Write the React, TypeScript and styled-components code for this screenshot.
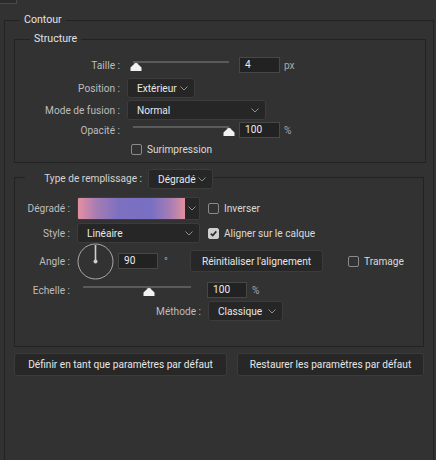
import React from "react";
import styled, { createGlobalStyle } from "styled-components";

const Global = createGlobalStyle`
  html, body { margin: 0; padding: 0; background: #323232; }
  body { width: 436px; height: 460px; overflow: hidden; }
  * { box-sizing: border-box; }
`;

const Page = styled.div`
  width: 436px;
  height: 460px;
  overflow: hidden;
  background: #323232;
  font-family: Roboto, "Open Sans", "Liberation Sans", sans-serif;
  font-size: 10.15px;
  color: #d8d8d8;
`;

const TabStub = styled.div`
  width: 17px;
  height: 4px;
  background: #2b2b2b;
  border-right: 1px solid #4a4a4a;
  border-bottom: 1px solid #4a4a4a;
`;

const Group = styled.fieldset<{ $mt: number; $ml: number; $mr: number; $pt?: number; $pb?: number; $minH?: number }>`
  margin: ${(p) => p.$mt}px ${(p) => p.$mr}px 0 ${(p) => p.$ml}px;
  padding: ${(p) => p.$pt ?? 0}px 0 ${(p) => p.$pb ?? 0}px 0;
  min-width: 0;
  min-height: ${(p) => p.$minH ?? 0}px;
  border: 1px solid #222222;
  border-radius: 0;
`;

const Legend = styled.legend`
  margin-left: 15px;
  padding: 0 4px;
  height: 14px;
  line-height: 14px;
  color: #e2e2e2;
  font-size: 10.6px;
`;

const FillLegend = styled.legend`
  margin-left: 10px;
  padding: 4px 1px 0 19px;
  height: 24px;
  display: flex;
  align-items: center;
`;

const LegendLabel = styled.span`
  width: 98px;
  text-align: right;
  color: #d2d2d2;
  margin-right: 6px;
  line-height: 20px;
  white-space: nowrap;
`;

const Row = styled.div<{ $h: number; $mt?: number }>`
  display: flex;
  align-items: center;
  height: ${(p) => p.$h}px;
  margin-top: ${(p) => p.$mt ?? 0}px;
`;

const Label = styled.span<{ $w: number }>`
  flex: none;
  width: ${(p) => p.$w}px;
  margin-right: 7px;
  text-align: right;
  color: #bdbdbd;
  white-space: nowrap;
`;

const SelectBox = styled.div<{ $w: number; $ml?: number }>`
  flex: none;
  width: ${(p) => p.$w}px;
  height: 20px;
  margin-left: ${(p) => p.$ml ?? 0}px;
  display: flex;
  align-items: center;
  justify-content: space-between;
  padding: 0 6px 0 9px;
  background: #262626;
  border: 1px solid #3c3c3c;
  border-radius: 3px;
  color: #e8e8e8;
  white-space: nowrap;
`;

const Chevron = () => (
  <svg width="8" height="5" viewBox="0 0 8 5" style={{ flex: "none" }}>
    <path d="M0.5 0.5 L4 4 L7.5 0.5" fill="none" stroke="#8e8e8e" strokeWidth="1" />
  </svg>
);

const Select = ({ w, ml, value }: { w: number; ml?: number; value: string }) => (
  <SelectBox $w={w} $ml={ml}>
    <span>{value}</span>
    <Chevron />
  </SelectBox>
);

const NumInput = styled.div<{ $w: number; $ml: number }>`
  flex: none;
  width: ${(p) => p.$w}px;
  height: 16px;
  margin-left: ${(p) => p.$ml}px;
  padding-left: 5px;
  line-height: 14px;
  background: #222222;
  border: 1px solid #474747;
  color: #ececec;
`;

const Unit = styled.span<{ $ml: number; $w?: number }>`
  flex: none;
  margin-left: ${(p) => p.$ml}px;
  width: ${(p) => (p.$w ? `${p.$w}px` : "auto")};
  color: #a8a8a8;
`;

const SliderBox = styled.div<{ $w: number }>`
  flex: none;
  align-self: flex-start;
  width: ${(p) => p.$w}px;
  height: 16px;
  padding: 4px 6px 0 6px;
`;

const Track = styled.div`
  height: 2px;
  background: #5a5a5a;
`;

const ThumbWrap = styled.div`
  height: 9px;
  margin-top: -1px;
  margin-left: -6px;
`;

const Thumb = () => (
  <svg width="12" height="9" viewBox="0 0 12 9" style={{ display: "block" }}>
    <path d="M0.5 9 V5.4 L5 1.2 Q6 0.3 7 1.2 L11.5 5.4 V9 Z" fill="#f2f2f2" />
  </svg>
);

const Slider = ({ w, p }: { w: number; p: number }) => {
  const track = w - 12;
  const left = 3 + p * (track - 3);
  return (
    <SliderBox $w={w}>
      <Track />
      <ThumbWrap style={{ paddingLeft: `${left}px` }}>
        <Thumb />
      </ThumbWrap>
    </SliderBox>
  );
};

const CheckBox = styled.span<{ $on?: boolean; $ml: number }>`
  flex: none;
  width: 11px;
  height: 11px;
  margin-left: ${(p) => p.$ml}px;
  border-radius: 2px;
  border: 1px solid ${(p) => (p.$on ? "#cfcfcf" : "#8a8a8a")};
  background: ${(p) => (p.$on ? "#cfcfcf" : "transparent")};
  display: flex;
  align-items: center;
  justify-content: center;
`;

const CheckText = styled.span`
  margin-left: 5px;
  color: #dadada;
  white-space: nowrap;
`;

const Check = ({ label, on, ml }: { label: string; on?: boolean; ml: number }) => (
  <>
    <CheckBox $on={on} $ml={ml}>
      {on && (
        <svg width="9" height="9" viewBox="0 0 9 9">
          <path d="M1.8 4.6 L3.7 6.5 L7.3 2.4" fill="none" stroke="#2a2a2a" strokeWidth="1.6" />
        </svg>
      )}
    </CheckBox>
    <CheckText>{label}</CheckText>
  </>
);

const GradientPicker = styled.div`
  flex: none;
  width: 123px;
  height: 23px;
  display: flex;
  border: 1px solid #3c3c3c;
  border-radius: 2px;
  background: #262626;
  overflow: hidden;
`;

const GradientSwatch = styled.div`
  flex: 1;
  background: linear-gradient(to right, #e48fa1 0%, #a47cb4 18%, #7d70c0 38%, #786fc3 68%, #a57db4 86%, #e28f9e 100%);
`;

const ChevronCell = styled.div`
  flex: none;
  width: 14px;
  display: flex;
  align-items: center;
  justify-content: center;
`;

const Dial = () => (
  <svg width="37" height="37" viewBox="0 0 37 37" style={{ flex: "none" }}>
    <circle cx="18.5" cy="18.5" r="17.5" fill="none" stroke="#a9a9a9" strokeWidth="1" />
    <line x1="18.5" y1="18.5" x2="18.5" y2="2" stroke="#cfcfcf" strokeWidth="1.6" />
    <circle cx="18.5" cy="18.5" r="2" fill="#cfcfcf" />
  </svg>
);

const SmallButton = styled.div<{ $w: number; $ml: number }>`
  flex: none;
  width: ${(p) => p.$w}px;
  height: 22px;
  margin-left: ${(p) => p.$ml}px;
  display: flex;
  align-items: center;
  justify-content: center;
  background: #272727;
  border: 1px solid #3b3b3b;
  border-radius: 3px;
  color: #e6e6e6;
  white-space: nowrap;
`;

const ButtonBar = styled.div`
  display: flex;
  gap: 10px;
  margin: 6px 0 0 9px;
`;

const WideButton = styled.div<{ $w: number }>`
  flex: none;
  width: ${(p) => p.$w}px;
  height: 23px;
  display: flex;
  align-items: center;
  justify-content: center;
  background: #272727;
  border: 1px solid #3b3b3b;
  border-radius: 3px;
  color: #e6e6e6;
  white-space: nowrap;
`;

export default function App() {
  return (
    <Page>
      <Global />
      <TabStub />
      <Group $mt={9} $ml={4} $mr={2} $minH={470}>
        <Legend>Contour</Legend>

        <Group $mt={5} $ml={9} $mr={7} $pt={11} $pb={5}>
          <Legend>Structure</Legend>
          <Row $h={16}>
            <Label $w={105}>Taille :</Label>
            <Slider w={108} p={0} />
            <NumInput $w={41} $ml={4}>4</NumInput>
            <Unit $ml={4}>px</Unit>
          </Row>
          <Row $h={20} $mt={5}>
            <Label $w={105}>Position :</Label>
            <Select w={68} value="Extérieur" />
          </Row>
          <Row $h={20} $mt={2}>
            <Label $w={105}>Mode de fusion :</Label>
            <Select w={139} value="Normal" />
          </Row>
          <Row $h={16} $mt={2}>
            <Label $w={105}>Opacité :</Label>
            <Slider w={108} p={1} />
            <NumInput $w={41} $ml={4}>100</NumInput>
            <Unit $ml={4}>%</Unit>
          </Row>
          <Row $h={15} $mt={4}>
            <Label $w={105} />
            <Check label="Surimpression" ml={4} />
          </Row>
        </Group>

        <Group $mt={2} $ml={9} $mr={9} $pt={8} $pb={25}>
          <FillLegend>
            <LegendLabel>Type de remplissage :</LegendLabel>
            <Select w={65} value="Dégradé" />
          </FillLegend>
          <Row $h={23}>
            <Label $w={55}>Dégradé :</Label>
            <GradientPicker>
              <GradientSwatch />
              <ChevronCell>
                <Chevron />
              </ChevronCell>
            </GradientPicker>
            <Check label="Inverser" ml={8} />
          </Row>
          <Row $h={20} $mt={3}>
            <Label $w={55}>Style :</Label>
            <Select w={123} value="Linéaire" />
            <Check label="Aligner sur le calque" on ml={8} />
          </Row>
          <Row $h={36}>
            <Label $w={55}>Angle :</Label>
            <Dial />
            <NumInput $w={40} $ml={4}>90</NumInput>
            <Unit $ml={6} $w={26}>°</Unit>
            <SmallButton $w={133} $ml={0}>Réinitialiser l'alignement</SmallButton>
            <Check label="Tramage" ml={25} />
          </Row>
          <Row $h={16} $mt={3}>
            <Label $w={55}>Echelle :</Label>
            <Slider w={120} p={0.6} />
            <NumInput $w={40} $ml={10}>100</NumInput>
            <Unit $ml={5}>%</Unit>
          </Row>
          <Row $h={20} $mt={3}>
            <Label $w={186}>Méthode :</Label>
            <Select w={75} value="Classique" />
          </Row>
        </Group>

        <ButtonBar>
          <WideButton $w={213}>Définir en tant que paramètres par défaut</WideButton>
          <WideButton $w={187}>Restaurer les paramètres par défaut</WideButton>
        </ButtonBar>
      </Group>
    </Page>
  );
}
